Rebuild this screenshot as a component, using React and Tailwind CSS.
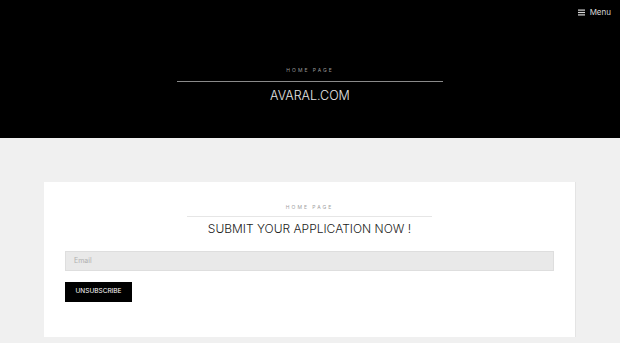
import React from 'react';

const font = { fontFamily: '"Inter", "Liberation Sans", sans-serif' };

const App = () => {
  return (
    <div className="w-[620px] h-[343px] overflow-hidden bg-[#f0f0f0]" style={font}>
      <header className="relative h-[138px] bg-black flex flex-col items-center">
        <div className="absolute right-[9px] top-[6px] flex items-center gap-[5px] text-[#d8d8d8] text-[8px]">
          <svg width="7" height="7" viewBox="0 0 7 7" fill="#d8d8d8">
            <rect x="0" y="0.5" width="7" height="1.2" />
            <rect x="0" y="2.9" width="7" height="1.2" />
            <rect x="0" y="5.3" width="7" height="1.2" />
          </svg>
          <span>Menu</span>
        </div>
        <div className="mt-[68px] text-[5px] tracking-[2px] text-[#9a9a9a] leading-none">HOME PAGE</div>
        <div className="mt-[8px] w-[266px] h-px bg-[#8a8a8a]"></div>
        <div className="mt-[8px] text-[12.5px] font-light text-[#e6e6e6] leading-none">AVARAL.COM</div>
      </header>
      <main className="px-[44px] pt-[44px]">
        <div className="bg-white h-[155px] border-r border-[#e4e4e4] flex flex-col px-[21px]">
          <div className="flex flex-col items-center">
            <div className="mt-[23px] text-[5px] tracking-[2px] text-[#a0a0a0] leading-none">HOME PAGE</div>
            <div className="mt-[6px] w-[245px] h-px bg-[#e6e6e6]"></div>
            <div className="mt-[6px] text-[12px] font-light text-[#222] leading-none">SUBMIT YOUR APPLICATION NOW !</div>
          </div>
          <div className="mt-[16px] h-[20px] bg-[#e9e9e9] border border-[#dedede] flex items-center pl-[8px] text-[7px] text-[#b0b0b0]">
            Email
          </div>
          <div className="mt-[11px] w-[67px] h-[20px] bg-black flex items-center justify-center text-[6.5px] text-white">
            UNSUBSCRIBE
          </div>
        </div>
      </main>
    </div>
  );
};

export default App;
